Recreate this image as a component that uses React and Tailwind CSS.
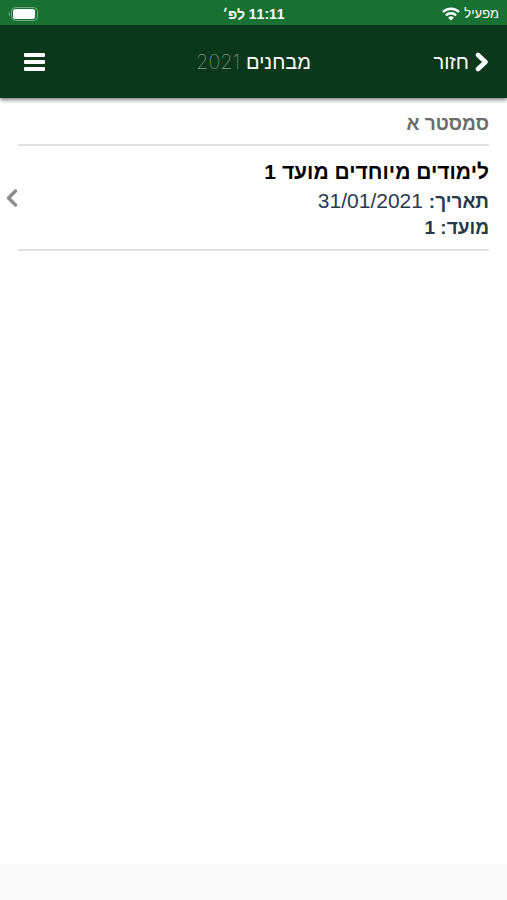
const exams = [
  {
    title: "לימודים מיוחדים מועד 1",
    date: "31/01/2021",
    term: "1"
  }
];

const Wifi = () => (
  <svg className="h-[14px] w-[18px]" viewBox="0 0 18 14" fill="#fff">
    <path d="M9 13.5L6.2 10.7A4 4 0 0 1 11.8 10.7Z" />
    <g fill="none" stroke="#fff" strokeWidth="2.4">
      <path d="M3.9 8.3A7.3 7.3 0 0 1 14.1 8.3" />
      <path d="M1 5A11.4 11.4 0 0 1 17 5" />
    </g>
  </svg>
);

const Battery = () => (
  <svg className="h-[14px] w-[30px]" viewBox="0 0 30 14" fill="#fff">
    <path d="M1.6 5C0.2 5.6 0.2 8.4 1.6 9Z" opacity="0.5" />
    <rect x="3.5" y="0.5" width="26" height="13" rx="4" fill="none" stroke="#fff" opacity="0.4" />
    <rect x="5" y="2" width="22" height="10" rx="2.5" />
  </svg>
);

const Chevron = ({ className, width, d }) => (
  <svg className={className} viewBox="0 0 14 20" fill="none" stroke="currentColor" strokeWidth={width}>
    <path d={d} strokeLinecap="round" strokeLinejoin="round" />
  </svg>
);

const StatusBar = () => (
  <div className="relative z-10 grid h-[25px] grid-cols-3 items-center bg-[#177132] px-2 pt-0.5 text-white">
    <div className="flex items-center gap-1 text-[13px] leading-5">
      <span>מפעיל</span>
      <Wifi />
    </div>
    <div className="text-center text-sm leading-5 font-bold">11:11 לפ׳</div>
    <div className="flex justify-end">
      <Battery />
    </div>
  </div>
);

const Header = () => (
  <header className="relative grid h-[73px] grid-cols-3 items-center bg-[#0b371b] px-[18px] text-white shadow-[0_2px_4px_rgba(0,0,0,0.5)]">
    <button className="flex items-center gap-1.5 text-xl">
      <Chevron className="h-5 w-3.5" width="4.5" d="M3 3L10.5 10L3 17" />
      <span>חזור</span>
    </button>
    <h1 className="flex justify-center gap-1.5 text-xl">
      <span>מבחנים</span>
      <span className="font-[Inter] font-thin text-[#b4c6b9]">2021</span>
    </h1>
    <button aria-label="תפריט" className="mx-1.5 justify-self-end">
      <svg className="h-[18px] w-[21px]" viewBox="0 0 21 18" fill="#fff">
        <rect width="21" height="4" rx="1" />
        <rect y="7" width="21" height="4" rx="1" />
        <rect y="14" width="21" height="4" rx="1" />
      </svg>
    </button>
  </header>
);

const ExamRow = ({ exam }) => (
  <li className="flex items-center">
    <a href="#exam" className="flex w-full items-center pr-[18px] pl-[5px]">
      <div className="flex-1 pt-2.5 pb-2 text-[#28394e]">
        <h3 className="text-[21px] leading-8 font-bold text-black">{exam.title}</h3>
        <p className="text-[21px] leading-[26px]">
          <b className="text-[19px]">תאריך:</b> {exam.date}
        </p>
        <p className="text-[19px] leading-[26px] font-bold">מועד: {exam.term}</p>
      </div>
      <Chevron className="h-5 w-3.5 text-[#8e8e8e]" width="3.5" d="M10.5 3L3.5 10L10.5 17" />
    </a>
  </li>
);

const App = () => {
  return (
    <div
      dir="rtl"
      lang="he"
      className="flex min-h-screen flex-col bg-white font-['Liberation_Sans','Open_Sans',sans-serif]"
    >
      <StatusBar />
      <Header />
      <main className="flex-1">
        <h2 className="mx-[18px] border-b-2 border-[#e0e0e0] pt-3 pb-1.5 text-[19px] leading-7 font-bold text-[#6b6b6b]">
          סמסטר א
        </h2>
        <ul>
          {exams.map((exam) => (
            <ExamRow key={exam.title} exam={exam} />
          ))}
        </ul>
        <hr className="mx-[18px] border-t-2 border-[#e0e0e0]" />
      </main>
      <footer className="h-9 bg-[#fafafa]"></footer>
    </div>
  );
};

export default App;
